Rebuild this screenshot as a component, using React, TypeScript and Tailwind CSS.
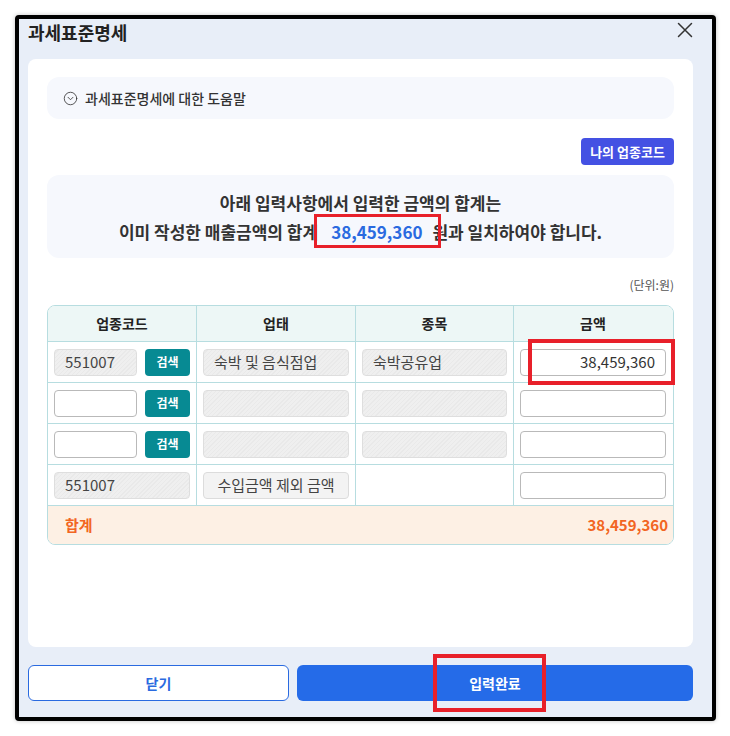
import { CircleChevronDown } from "lucide-react";

const hatch =
  "bg-[repeating-linear-gradient(135deg,#efefef_0px,#efefef_2px,#e9e9e9_2px,#e9e9e9_3px)]";

function ReadOnly({ value, className = "" }: { value?: string; className?: string }) {
  return (
    <div
      className={`h-[27px] rounded-[4px] border border-[#dedede] ${hatch} flex items-center pl-[10px] text-[15px] text-[#444] ${className}`}
    >
      {value}
    </div>
  );
}

function TextBox({ value, right }: { value?: string; right?: boolean }) {
  return (
    <div
      className={`h-[27px] w-full rounded-[4px] border border-[#b9b9b9] bg-white flex items-center text-[15px] text-[#333] ${
        right ? "justify-end pr-[10px]" : "pl-[10px]"
      }`}
    >
      {value}
    </div>
  );
}

function SearchButton() {
  return (
    <button className="h-[27px] w-[45px] shrink-0 rounded-[4px] bg-[#078a93] text-[12px] font-bold text-white">
      검색
    </button>
  );
}

const cell = "flex items-center px-[6px] border-r border-[#b7dde0]";
const last = "flex items-center px-[6px]";

function Row({
  code,
  type,
  item,
  amount,
  search = true,
}: {
  code?: string;
  type?: React.ReactNode;
  item?: React.ReactNode;
  amount?: string;
  search?: boolean;
}) {
  return (
    <div className="grid grid-cols-[149px_159px_158px_158px] h-[41px] border-b border-[#b7dde0]">
      <div className={`${cell} gap-[8px]`}>
        {search ? (
          <>
            {code ? (
              <ReadOnly value={code} className="w-[86px]" />
            ) : (
              <div className="w-[86px]">
                <TextBox />
              </div>
            )}
            <SearchButton />
          </>
        ) : (
          <ReadOnly value={code} className="w-full" />
        )}
      </div>
      <div className={cell}>{type}</div>
      <div className={cell}>{item}</div>
      <div className={last}>
        <TextBox value={amount} right />
      </div>
    </div>
  );
}

export default function App() {
  return (
    <div
      className="relative w-[730px] h-[736px] bg-white pt-[15px] pl-[15px]"
      style={{ fontFamily: '"Noto Sans CJK KR", "Noto Sans", sans-serif' }}
    >
      <div className="w-[701px] h-[706px] border-4 border-black rounded-[4px] bg-[#e8eef8] flex flex-col shadow-[0_0_4px_rgba(0,0,0,0.25)]">
        <div className="h-[40px] flex items-start justify-between pl-[9px] pr-[19px]">
          <h1 className="text-[18px] leading-[26px] font-semibold text-[#222]">과세표준명세</h1>
          <svg className="mt-[3px]" width="16" height="16" viewBox="0 0 16 16" fill="none" stroke="#333" strokeWidth="1.5" strokeLinecap="round">
            <path d="M1.5 1.5 14.5 14.5M14.5 1.5 1.5 14.5" />
          </svg>
        </div>

        <div className="ml-[9px] mr-[19px] h-[588px] bg-white rounded-[8px] px-[19px] pt-[18px]">
          <div className="h-[42px] rounded-[12px] bg-[#f6f8fd] flex items-center pl-[16px] gap-[7px] text-[14px] text-[#333]">
            <CircleChevronDown className="w-[15px] h-[15px]" strokeWidth={1.3} />
            <span className="font-medium">과세표준명세에 대한 도움말</span>
          </div>

          <div className="mt-[19px] flex justify-end">
            <button className="h-[27px] w-[93px] rounded-[4px] bg-[#4451e3] text-[13px] font-bold text-white">
              나의 업종코드
            </button>
          </div>

          <div className="mt-[10px] h-[83px] rounded-[12px] bg-[#f6f8fd] flex flex-col items-center justify-center text-[17px] leading-[29px] font-semibold text-[#333]">
            <p>아래 입력사항에서 입력한 금액의 합계는</p>
            <p>
              이미 작성한 매출금액의 합계
              <span className="ml-[13px] mr-[10px] text-[#2a6ae0]">38,459,360</span>
              원과 일치하여야 합니다.
            </p>
          </div>

          <p className="mt-[18px] text-right text-[12px] leading-[18px] text-[#555]">(단위:원)</p>

          <div className="mt-[11px] rounded-[8px] border border-[#b7dde0] overflow-hidden">
            <div className="grid grid-cols-[149px_159px_158px_158px] h-[36px] bg-[#edf7f6] border-b border-[#b7dde0] text-[14px] font-bold text-[#222]">
              <div className="flex items-center justify-center border-r border-[#b7dde0]">업종코드</div>
              <div className="flex items-center justify-center border-r border-[#b7dde0]">업태</div>
              <div className="flex items-center justify-center border-r border-[#b7dde0]">종목</div>
              <div className="flex items-center justify-center">금액</div>
            </div>
            <Row
              code="551007"
              type={<ReadOnly value="숙박 및 음식점업" className="w-full" />}
              item={<ReadOnly value="숙박공유업" className="w-full" />}
              amount="38,459,360"
            />
            <Row type={<ReadOnly className="w-full" />} item={<ReadOnly className="w-full" />} />
            <Row type={<ReadOnly className="w-full" />} item={<ReadOnly className="w-full" />} />
            <Row
              code="551007"
              search={false}
              type={
                <div className="h-[27px] w-full rounded-[4px] border border-[#dcdcdc] bg-[#f3f3f3] flex items-center justify-center text-[15px] text-[#444]">
                  수입금액 제외 금액
                </div>
              }
            />
            <div className="h-[38px] bg-[#fdf0e4] flex items-center justify-between pl-[17px] pr-[5px] text-[15px] font-bold text-[#f26522]">
              <span>합계</span>
              <span>38,459,360</span>
            </div>
          </div>
        </div>

        <div className="mt-[18px] ml-[9px] mr-[19px] flex gap-[8px]">
          <button className="h-[36px] w-[261px] rounded-[6px] border border-[#2a6ae0] bg-white text-[14px] font-semibold text-[#2a6ae0]">
            닫기
          </button>
          <button className="h-[36px] flex-1 rounded-[6px] bg-[#256be8] text-[14px] font-bold text-white">
            입력완료
          </button>
        </div>
      </div>

      {/* highlight frames */}
      <div className="absolute left-[314px] top-[214px] w-[127px] h-[34px] border-[3px] border-[#e8202a]" />
      <div className="absolute left-[528px] top-[339px] w-[147px] h-[46px] border-4 border-[#e8202a]" />
      <div className="absolute left-[433px] top-[654px] w-[113px] h-[58px] border-4 border-[#e8202a]" />
    </div>
  );
}
